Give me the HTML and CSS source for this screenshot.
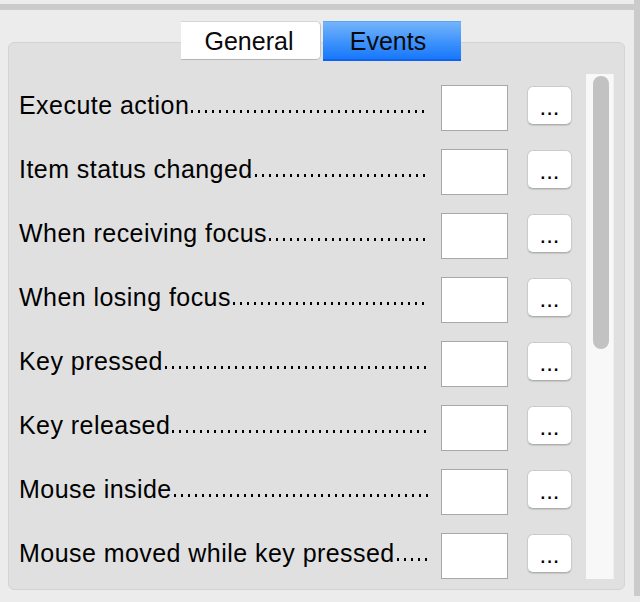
FILE: index.html
```html
<!DOCTYPE html>
<html>
<head>
<meta charset="utf-8">
<link rel="stylesheet" href="styles.css">
</head>
<body>
<div class="window">
  <div class="main">
    <div class="topbar"></div>
    <div class="tabs">
      <div class="tab tab-general">General</div>
      <div class="tab tab-events">Events</div>
    </div>
    <div class="panel">
      <div class="viewport">
        <div class="rows">
          <div class="row"><div class="label"><span class="text">Execute action</span><span class="leader"></span></div><div class="field"></div><div class="btn">...</div></div>
          <div class="row"><div class="label"><span class="text">Item status changed</span><span class="leader"></span></div><div class="field"></div><div class="btn">...</div></div>
          <div class="row"><div class="label"><span class="text">When receiving focus</span><span class="leader"></span></div><div class="field"></div><div class="btn">...</div></div>
          <div class="row"><div class="label"><span class="text">When losing focus</span><span class="leader"></span></div><div class="field"></div><div class="btn">...</div></div>
          <div class="row"><div class="label"><span class="text">Key pressed</span><span class="leader"></span></div><div class="field"></div><div class="btn">...</div></div>
          <div class="row"><div class="label"><span class="text">Key released</span><span class="leader"></span></div><div class="field"></div><div class="btn">...</div></div>
          <div class="row"><div class="label"><span class="text">Mouse inside</span><span class="leader"></span></div><div class="field"></div><div class="btn">...</div></div>
          <div class="row"><div class="label"><span class="text">Mouse moved while key pressed</span><span class="leader"></span></div><div class="field"></div><div class="btn">...</div></div>
        </div>
        <div class="track"><div class="thumb"></div></div>
      </div>
    </div>
  </div>
  <div class="rstrip"></div>
</div>
</body>
</html>
```
FILE: styles.css
```css
html, body {
  margin: 0;
  padding: 0;
  background: #ececec;
  width: 640px;
  height: 602px;
  overflow: hidden;
  font-family: "Liberation Sans", Arial, sans-serif;
  color: #000;
}
.window {
  display: flex;
  height: 602px;
}
.main {
  width: 634px;
  display: flex;
  flex-direction: column;
}
.rstrip {
  width: 6px;
  height: 596px;
  background: #cbcbcb;
}
.topbar {
  margin-top: 4px;
  height: 6px;
  background: #cbcbcb;
}
.tabs {
  margin-top: 11px;
  height: 40px;
  display: flex;
  align-items: flex-start;
  gap: 2px;
  padding-left: 181px;
  position: relative;
  z-index: 1;
  margin-bottom: -19px;
}
.tab {
  box-sizing: border-box;
  height: 40px;
  font-size: 25px;
  line-height: 38px;
  text-align: center;
  color: #0a0a0a;
}
.tab-general {
  width: 140px;
  height: 39px;
  background: #fff;
  border-top: 1px solid #d6d6d6;
  border-right: 1px solid #c4c4c4;
  border-bottom: 1px solid #b4b4b4;
  border-radius: 0 5px 5px 0;
  padding-right: 3px;
}
.tab-events {
  width: 138px;
  background: linear-gradient(#74b4fa, #3d92fb 55%, #1878fc);
  border-top: 1px solid #5ea4f6;
  border-bottom: 2px solid #1062ee;
  padding-right: 8px;
}
.panel {
  margin-left: 8px;
  width: 617px;
  height: 548px;
  box-sizing: border-box;
  background: #e0e0e0;
  border: 1px solid #d4d4d4;
  border-radius: 6px;
  padding: 31px 10px 10px 10px;
}
.viewport {
  display: flex;
  height: 505px;
  overflow: hidden;
}
.rows {
  display: flex;
  flex-direction: column;
  padding-top: 11px;
  width: 567px;
}
.row {
  display: flex;
  align-items: flex-start;
  height: 64px;
  flex-shrink: 0;
}
.label {
  width: 410px;
  height: 40px;
  display: flex;
  font-size: 25px;
  line-height: 40px;
  letter-spacing: 0.45px;
  white-space: nowrap;
}
.text {
  flex-shrink: 0;
}
.leader {
  flex: 1;
  height: 40px;
  background-image: linear-gradient(to right, #000 2px, transparent 2px);
  background-size: 7px 3px;
  background-repeat: repeat-x;
  background-position: 2px 25px;
}
.field {
  margin-left: 12px;
  width: 67px;
  height: 46px;
  box-sizing: border-box;
  background: #fff;
  border: 1px solid #a8a8a8;
}
.btn {
  margin-left: 19px;
  margin-top: 1px;
  width: 45px;
  height: 39px;
  box-sizing: border-box;
  background: #fff;
  border: 1px solid #cbcbcb;
  border-bottom-color: #b0b0b0;
  border-radius: 6px;
  box-shadow: 0 1px 1px rgba(0,0,0,0.12);
  font-size: 24px;
  line-height: 40px;
  text-align: center;
}
.track {
  margin-left: 14px;
  width: 28px;
  height: 505px;
  background: #f8f8f8;
  border-right: 1px solid #f0f0f0;
  box-sizing: border-box;
  padding: 2px 0 0 7px;
}
.thumb {
  width: 16px;
  height: 273px;
  border-radius: 8px;
  background: #c2c2c2;
}
```
